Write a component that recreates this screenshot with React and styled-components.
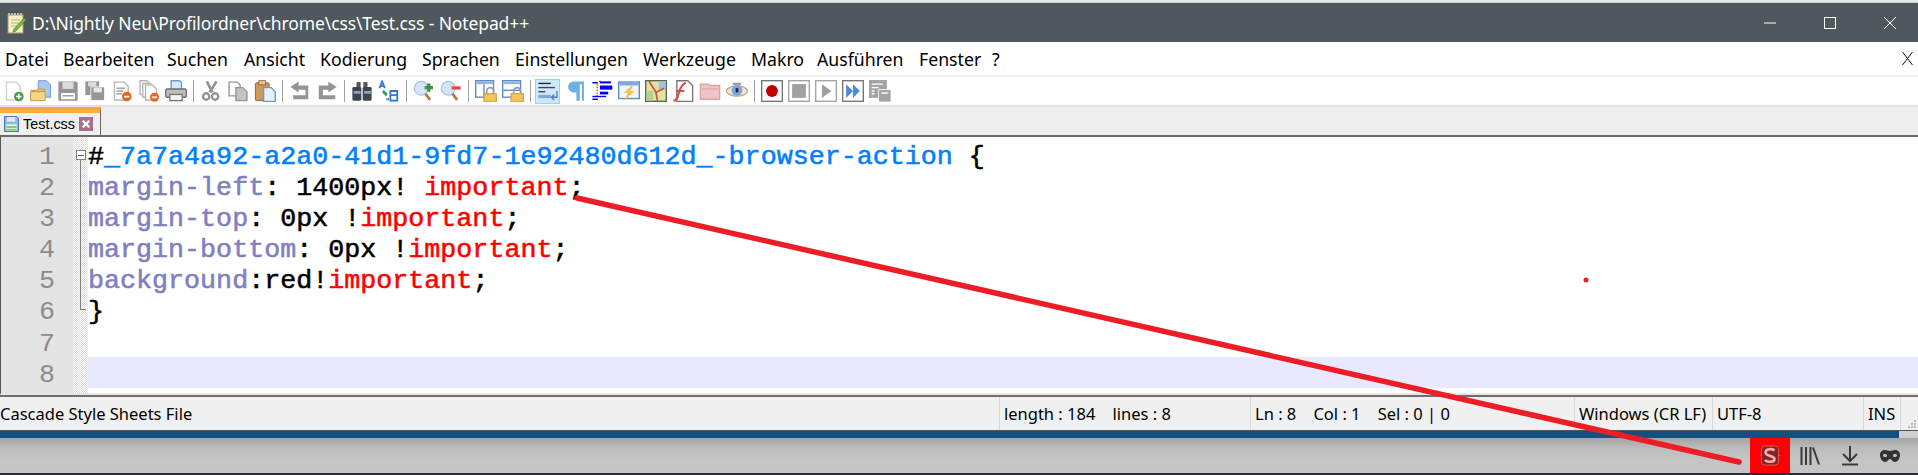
import React from 'react'
import styled, { createGlobalStyle } from 'styled-components'

const GlobalStyle = createGlobalStyle`
  html, body {
    margin: 0;
    padding: 0;
    background: #fff;
    overflow: hidden;
  }
`

const Page = styled.div`
  position: relative;
  width: 1918px;
  height: 475px;
  overflow: hidden;
  display: flex;
  flex-direction: column;
  font-family: 'Noto Sans', 'Open Sans', sans-serif;
`

const TopStrip = styled.div`
  height: 3px;
  flex: none;
  background: #e9e9e9;
  border-bottom: 1px solid #cfcfcf;
  box-sizing: border-box;
`

const TitleBar = styled.div`
  height: 39px;
  flex: none;
  background: #4e585d;
  display: flex;
  align-items: center;
  color: #fff;
  padding-left: 7px;
`

const TitleText = styled.span`
  margin-left: 5px;
  font-size: 17.5px;
  letter-spacing: -0.12px;
  white-space: nowrap;
  flex: 1;
`

const WindowButton = styled.div`
  width: 60px;
  display: flex;
  justify-content: center;
  align-items: center;
  &:last-child {
    margin-right: -2px;
  }
`

const MenuBar = styled.div`
  height: 33px;
  flex: none;
  background: #fff;
  display: flex;
  align-items: center;
  padding-left: 5px;
  font-size: 17.7px;
  color: #000;
  gap: 15px;
  position: relative;
`

const MenuItem = styled.span`
  width: ${(p) => p.$w}px;
  white-space: nowrap;
`

const MenuClose = styled.div`
  margin-left: auto;
  margin-right: 5px;
  display: flex;
`

const ToolStrip = styled.div`
  height: 32px;
  flex: none;
  box-sizing: border-box;
  background: #fff;
  border-top: 2px solid #f0f0f0;
  border-bottom: 2px solid #e2e2e2;
  display: flex;
  align-items: center;
`

const ToolButton = styled.div`
  width: ${(p) => (p.$active ? 25 : 27)}px;
  height: 25px;
  flex: none;
  box-sizing: border-box;
  display: flex;
  align-items: center;
  justify-content: center;
  margin: ${(p) => (p.$active ? '0 1px' : '0')};
  background: ${(p) => (p.$active ? '#cce8ff' : 'transparent')};
  border: 1px solid ${(p) => (p.$active ? '#99d1ff' : 'transparent')};
`

const ToolSeparator = styled.div`
  width: 8px;
  height: 22px;
  flex: none;
  display: flex;
  justify-content: center;
  &::before {
    content: '';
    width: 1px;
    background: #a0a0a0;
  }
`

const TabBar = styled.div`
  height: 28px;
  flex: none;
  background: #eeeeee;
  display: flex;
  border-bottom: 2px solid #6a6a6a;
`

const Tab = styled.div`
  width: 96px;
  background: #f0f0f0;
  border-top: 6px solid #fbaa3f;
  border-right: 1px solid #666;
  display: flex;
  align-items: center;
  padding-left: 4px;
  gap: 4px;
  font-family: 'Liberation Sans', sans-serif;
  font-size: 14.4px;
  color: #000;
`

const TabName = styled.span`
  width: 52px;
  white-space: nowrap;
`

const Editor = styled.div`
  height: 258px;
  flex: none;
  display: flex;
  background: #fff;
  border-left: 1px solid #555;
  border-bottom: 2px solid #e6e6e6;
  box-sizing: border-box;
  font-family: 'Liberation Mono', monospace;
  font-size: 26.7px;
`

const Gutter = styled.div`
  width: 72px;
  flex: none;
  background: #e4e4e4;
  padding-top: 2px;
  color: #8c8c8c;
  text-align: right;
`

const GutterNumber = styled.div`
  height: 31.1px;
  line-height: 36px;
  padding-right: 18px;
`

const FoldMargin = styled.div`
  width: 15px;
  flex: none;
  position: relative;
  background: repeating-conic-gradient(#dcdcdc 0% 25%, #ffffff 0% 50%) 0 0 / 2px 2px;
`

const FoldBox = styled.div`
  position: absolute;
  left: 3px;
  top: 13px;
  width: 10px;
  height: 10px;
  box-sizing: border-box;
  background: #fff;
  border: 1px solid #808080;
  display: flex;
  align-items: center;
  justify-content: center;
  &::before {
    content: '';
    width: 6px;
    height: 1px;
    background: #606060;
  }
`

const FoldLine = styled.div`
  position: absolute;
  left: 7px;
  top: 23px;
  width: 6px;
  height: 150px;
  box-sizing: border-box;
  border-left: 1px solid #808080;
  border-bottom: 1px solid #808080;
`

const Code = styled.div`
  flex: 1;
  padding-top: 2px;
  font-weight: 400;
  -webkit-text-stroke: 0.55px currentColor;
  min-width: 0;
`

const CodeLine = styled.div`
  height: 31.1px;
  line-height: 36px;
  white-space: pre;
  color: #000;
  background: ${(p) => (p.$current ? '#e8e8ff' : 'transparent')};
`

const Prop = styled.span`
  color: #8080c0;
`

const Important = styled.span`
  color: #ff0000;
`

const Selector = styled.span`
  color: #0080ff;
`

const StatusBar = styled.div`
  height: 33px;
  flex: none;
  background: #f0f0f0;
  border-top: 2px solid #6f6f6f;
  display: flex;
  font-size: 16.5px;
  color: #000;
  position: relative;
`

const StatusCell = styled.div`
  width: ${(p) => p.$w}px;
  flex: none;
  box-sizing: border-box;
  padding-left: ${(p) => (p.$first ? 0 : 4)}px;
  border-right: 1px solid #d8d8d8;
  display: flex;
  align-items: center;
  white-space: pre;
`

const Grip = styled.div`
  flex: 1;
  display: flex;
  align-items: flex-end;
  justify-content: flex-end;
  padding: 0 1px 1px 0;
`

const BlueRow = styled.div`
  height: 8px;
  flex: none;
  border-top: 1px solid #555;
  box-sizing: border-box;
  display: flex;
  background: #cfcfcf;
`

const BlueBar = styled.div`
  width: 1899px;
  background: #14507f;
`

const BrowserBar = styled.div`
  height: 35px;
  flex: none;
  background: linear-gradient(#a4a4a4 0, #bcbcbc 10px, #c5c5c5 22px);
  display: flex;
  justify-content: flex-end;
  padding-right: 8px;
`

const BrowserButton = styled.div`
  width: 40px;
  display: flex;
  align-items: center;
  justify-content: center;
  background: ${(p) => (p.$red ? '#ff0000' : 'transparent')};
`

const BottomEdge = styled.div`
  height: 2px;
  flex: none;
  background: #2b2e33;
`

const Annotation = styled.svg`
  position: absolute;
  left: 0;
  top: 0;
  pointer-events: none;
`

const Icon = ({ children, size = 22 }) => (
  <svg width={size} height={size} viewBox="0 0 16 16">
    {children}
  </svg>
)

const grey = '#959595'

const Page16 = ({ x = 2, y = 1, w = 10, h = 13, stroke = '#b5b5b5', fill = '#fff' }) => (
  <path d={`M${x + 0.5} ${y + 0.5}h${w - 3}l3 3v${h - 3}h-${w}z`} fill={fill} stroke={stroke} />
)

const Padlock = () => (
  <>
    <path d="M8.500 10V8a2.500 2.500 0 0 1 5 0v2" fill="none" stroke="#9a9a9a" strokeWidth="1.200" />
    <rect x="6.500" y="10" width="9" height="6" fill="#f2c65c" stroke="#c8963a" strokeWidth=".7" />
  </>
)

const toolIcons = {
  newFile: (
    <>
      <Page16 stroke="#d0d0d0" />
      <circle cx="11.500" cy="12" r="3.500" fill="#4a9a4a" />
      <path d="M9.500 12h4M11.500 10v4" stroke="#fff" strokeWidth="1.200" />
    </>
  ),
  open: (
    <>
      <path d="M6 .5h6l3 3v9H6z" fill="#a8c8ee" stroke="#6c9ad0" strokeWidth=".7" />
      <path d="M.5 7.500h4l1-1h5v2h-9z" fill="#e8c272" stroke="#c59a46" strokeWidth=".7" />
      <path d="M.5 8.500h10.500v6.500h-10.500z" fill="#f6d687" stroke="#c59a46" strokeWidth=".7" />
    </>
  ),
  save: (
    <>
      <path d="M1 1h13l1 1v13H1z" fill={grey} />
      <rect x="4" y="1.500" width="8" height="5" fill="#dcdcdc" />
      <rect x="3" y="9.500" width="10" height="4.500" fill="#fff" />
      <rect x="4" y="11" width="8" height="1" fill={grey} />
    </>
  ),
  saveAll: (
    <>
      <rect x="1" y="1" width="10" height="10" fill={grey} />
      <rect x="3" y="1.500" width="6" height="3" fill="#dcdcdc" />
      <rect x="5" y="5" width="10" height="10" fill={grey} stroke="#fff" strokeWidth=".6" />
      <rect x="7" y="5.500" width="6" height="3.500" fill="#e6e6e6" />
    </>
  ),
  close: (
    <>
      <Page16 />
      <path d="M4 6h6M4 8h5M4 10h4" stroke="#a0a0a0" />
      <circle cx="11.500" cy="12" r="3.500" fill="#e8651a" />
      <rect x="9.500" y="11.500" width="4" height="1.200" fill="#fff" />
    </>
  ),
  closeAll: (
    <>
      <Page16 x={1} y={0} w={8} h={10} />
      <Page16 x={3} y={2} w={8} h={10} />
      <Page16 x={5} y={3} w={8} h={11} />
      <circle cx="12" cy="12.500" r="3.300" fill="#e8651a" />
      <rect x="10" y="12" width="4" height="1.200" fill="#fff" />
    </>
  ),
  print: (
    <>
      <path d="M4.500.500h6l1.500 1.500v5h-7.500z" fill="#d7e7f7" stroke="#6c9ad0" />
      <rect x=".5" y="6.500" width="15" height="6" rx="1" fill="#bdbdbd" stroke="#6f6f6f" />
      <rect x="3.500" y="10.500" width="9" height="4.500" fill="#f5f5f5" stroke="#777" />
    </>
  ),
  cut: (
    <>
      <path d="M5 1l4 8M12 1L7 9" stroke={grey} strokeWidth="2" />
      <circle cx="4.500" cy="12" r="2.300" fill="none" stroke={grey} strokeWidth="1.800" />
      <circle cx="11" cy="12" r="2.300" fill="none" stroke={grey} strokeWidth="1.800" />
    </>
  ),
  copy: (
    <>
      <path d="M1.500 1.500h6l2 2v8h-8z" fill="#fff" stroke={grey} />
      <path d="M6.500 5.500h5l3 3v6.500h-8z" fill="#c4c4c4" stroke={grey} />
    </>
  ),
  paste: (
    <>
      <rect x="1" y="2" width="10" height="13" rx="1" fill="#c9995e" stroke="#8e6534" strokeWidth=".7" />
      <rect x="3.500" y="0.500" width="5" height="3" fill="#e2c59b" stroke="#8e6534" strokeWidth=".6" />
      <path d="M7 5.500h5.500l3 3v7h-8.500z" fill="#e6f0fb" stroke="#6c9ad0" />
    </>
  ),
  undo: <path d="M7 1L1 5l6 4V7h5v4H3v3h11V4H7z" fill={grey} />,
  redo: <path d="M9 1l6 4-6 4V7H5v4h9v3H2V4h7z" fill={grey} />,
  find: (
    <>
      <rect x="4" y="1.500" width="3" height="4" fill="#555" />
      <rect x="9" y="1.500" width="3" height="4" fill="#555" />
      <rect x="1" y="5" width="6.500" height="10" rx="1" fill="#3c4650" />
      <rect x="8.500" y="5" width="6.500" height="10" rx="1" fill="#3c4650" />
      <rect x="2" y="8" width="5" height="2" fill="#8fa3b6" />
      <rect x="9.500" y="8" width="5" height="2" fill="#8fa3b6" />
    </>
  ),
  replace: (
    <>
      <path d="M1 6l2-5 2 5M2 4.500h2" fill="none" stroke="#2f78d0" strokeWidth="1.300" />
      <path d="M9 8h5v3H9zM9 11h5v4H9z" fill="none" stroke="#2f78d0" strokeWidth="1.300" />
      <path d="M4 7l3 3-1 2-3-3z" fill="#3d9a5a" />
      <path d="M6 14h2" stroke="#2f78d0" strokeWidth="1.300" />
    </>
  ),
  zoomIn: (
    <>
      <circle cx="6" cy="6" r="5" fill="#d3e6f8" stroke="#a9c4de" />
      <path d="M9 10l3.500 4.500" stroke="#b27a3c" strokeWidth="2" />
      <path d="M11.500 2.500v6M8.500 5.500h6" stroke="#3e9140" strokeWidth="2.400" />
    </>
  ),
  zoomOut: (
    <>
      <circle cx="6" cy="6" r="5" fill="#d3e6f8" stroke="#a9c4de" />
      <path d="M9 10l3.500 4.500" stroke="#b27a3c" strokeWidth="2" />
      <rect x="8.500" y="4.500" width="6.500" height="2.500" fill="#e84040" stroke="#f7a0a0" strokeWidth=".5" />
    </>
  ),
  syncV: (
    <>
      <rect x=".5" y=".5" width="13" height="12" fill="#fff" stroke="#5c8cc4" />
      <rect x="1" y="1" width="12" height="2" fill="#8fb6e2" />
      <path d="M6.500 3v9" stroke="#5c8cc4" />
      <Padlock />
    </>
  ),
  syncH: (
    <>
      <rect x=".5" y=".5" width="13" height="12" fill="#fff" stroke="#5c8cc4" />
      <rect x="1" y="1" width="12" height="2" fill="#8fb6e2" />
      <path d="M1 7.500h12" stroke="#5c8cc4" />
      <Padlock />
    </>
  ),
  wrap: (
    <>
      <path d="M1 2.500h9" stroke="#222" strokeWidth="1" />
      <path d="M1 5.500h12" stroke="#444" strokeWidth="1" />
      <path d="M1 8.500h5" stroke="#444" strokeWidth="1" />
      <path d="M1 12h9" stroke="#7fa9d6" strokeWidth="2.400" />
      <path d="M14.500 8v4.500h-4M12.500 10.500l-2 2 2 2" fill="none" stroke="#4f81bd" />
    </>
  ),
  pilcrow: <path d="M13 1H7a4 4 0 0 0 0 8h2v6h2.500V3H13v12h1.500V1z" fill="#6fb0e8" />,
  indent: (
    <>
      <path d="M1 2h4M1 14h4M6 1h1" stroke="#0000ee" />
      <path d="M4.500 3v9" stroke="#d03030" strokeDasharray="1 1" />
      <rect x="6.500" y="1" width="8" height="1.500" fill="#0000ee" />
      <rect x="6.500" y="4" width="9" height="3" fill="#0000ee" />
      <rect x="6.500" y="8.500" width="6" height="2" fill="#0000ee" />
      <rect x="1" y="11.500" width="10" height="1" fill="#0000ee" />
    </>
  ),
  lightning: (
    <>
      <rect x=".5" y="1.500" width="15" height="12" fill="#f2f5fa" stroke="#5c8cc4" />
      <rect x="1" y="2" width="14" height="2" fill="#7faadd" />
      <path d="M10 4L4 9.500h3L5 14.500l7-6.500H9l2-4z" fill="#f0c445" />
    </>
  ),
  map: (
    <>
      <rect x=".5" y=".5" width="15" height="15" fill="#dfe5a0" stroke="#5c6650" />
      <path d="M1 8h5v7H1z" fill="#b7d08a" />
      <path d="M10 1h5v6h-5z" fill="#9cc3e6" />
      <path d="M3 1l5 8 1 6M8 9l6-3" fill="none" stroke="#d24a3a" strokeWidth="1.200" />
    </>
  ),
  fn: (
    <>
      <path d="M3.500.500h8l3.500 3.500v11.500h-11.500z" fill="#fff" stroke="#777" />
      <path d="M1 15c3 0 3-3 4-6s2-6 5-7" fill="none" stroke="#e0484c" strokeWidth="1.600" />
      <path d="M3 8h6" stroke="#e0484c" strokeWidth="1.400" />
    </>
  ),
  folder: (
    <>
      <path d="M1 3h6l1 1h7v10H1z" fill="#efc4c4" stroke="#d9a4a4" />
      <rect x="2" y="6" width="12" height="1" fill="#e5a9a9" />
    </>
  ),
  eye: (
    <>
      <path d="M0 8c3-5 13-5 16 0-3 5-13 5-16 0z" fill="#efe8d8" stroke="#c9a77c" />
      <circle cx="8" cy="7.500" r="4" fill="#7ea8d8" />
      <rect x="7" y="6" width="2" height="3" fill="#223" />
      <rect x="5" y="2" width="6" height="1.500" fill="#999" />
    </>
  ),
  record: (
    <>
      <rect x=".5" y=".5" width="15" height="15" fill="#fff" stroke="#777" />
      <circle cx="8" cy="8" r="4.300" fill="#c00000" />
    </>
  ),
  stop: (
    <>
      <rect x=".5" y=".5" width="15" height="15" fill="#fff" stroke="#a5a5a5" />
      <rect x="3" y="3" width="10" height="10" fill="#a0a0a0" />
    </>
  ),
  play: (
    <>
      <rect x=".5" y=".5" width="15" height="15" fill="#fff" stroke="#a5a5a5" />
      <path d="M5 3l7 5-7 5z" fill="#a0a0a0" />
    </>
  ),
  playMany: (
    <>
      <rect x=".5" y=".5" width="15" height="15" fill="#fff" stroke="#777" />
      <path d="M3 3l5 5-5 5zM8 3l5 5-5 5z" fill="#4c8ade" />
    </>
  ),
  saveMacro: (
    <>
      <rect x="0" y="0" width="13" height="13" fill="#a4a4a4" />
      <path d="M2 3h8M2 5.500h5M2 8h2M2 10h2" stroke="#fff" />
      <rect x="7" y="7" width="9" height="9" fill="#a4a4a4" stroke="#fff" strokeWidth=".6" />
      <path d="M9 9.500h5" stroke="#fff" />
    </>
  ),
}

const toolbar = [
  'newFile', 'open', 'save', 'saveAll', 'close', 'closeAll', 'print', '|',
  'cut', 'copy', 'paste', '|',
  'undo', 'redo', '|',
  'find', 'replace', '|',
  'zoomIn', 'zoomOut', '|',
  'syncV', 'syncH', '|',
  'wrap', 'pilcrow', 'indent',
  'lightning', 'map', 'fn', 'folder', 'eye', '|',
  'record', 'stop', 'play', 'playMany', 'saveMacro',
]

const menus = [
  ['Datei', 43],
  ['Bearbeiten', 89],
  ['Suchen', 62],
  ['Ansicht', 61],
  ['Kodierung', 87],
  ['Sprachen', 78],
  ['Einstellungen', 113],
  ['Werkzeuge', 93],
  ['Makro', 51],
  ['Ausführen', 87],
  ['Fenster', 58],
  ['?', 10],
]

const NotepadIcon = () => (
  <svg width="20" height="22" viewBox="0 0 20 22">
    <rect x="1" y="3" width="15" height="18" fill="#f7efc4" stroke="#a59a6c" />
    <path d="M2 3V1M5 3V1M8 3V1M11 3V1M14 3V1" stroke="#d8d8d8" strokeWidth="1.500" />
    <path d="M4 8h9M4 11h8M4 14h6" stroke="#b9b08a" />
    <path d="M7 17l10-11 2 2-10 11-3 1z" fill="#7cb83e" stroke="#4f7f20" strokeWidth=".7" />
    <rect x="17" y="0" width="2" height="2" fill="#a83030" />
  </svg>
)

const DiskIcon = () => (
  <svg width="15" height="16" viewBox="0 0 16 17">
    <path d="M.5.500h13l2 2v14h-15z" fill="#8db8e6" stroke="#3f6fa8" />
    <rect x="3" y="1" width="9" height="5" fill="#dfeaf6" />
    <rect x="2.500" y="9" width="11" height="7" fill="#fff" />
    <rect x="2.500" y="10.500" width="11" height="2.200" fill="#8cc56e" />
    <rect x="2.500" y="13.500" width="11" height="2.200" fill="#8cc56e" />
  </svg>
)

const TabClose = () => (
  <svg width="14" height="14" viewBox="0 0 15 15">
    <rect width="15" height="15" fill="#a9708c" />
    <path d="M4 4l7 7M11 4l-7 7" stroke="#fff" strokeWidth="2.600" />
  </svg>
)

export default function App() {
  return (
    <Page>
      <GlobalStyle />
      <TopStrip />
      <TitleBar>
        <NotepadIcon />
        <TitleText>D:\Nightly Neu\Profilordner\chrome\css\Test.css - Notepad++</TitleText>
        <WindowButton>
          <svg width="12" height="12" viewBox="0 0 12 12">
            <path d="M0 6h12" stroke="#fff" strokeWidth="1" />
          </svg>
        </WindowButton>
        <WindowButton>
          <svg width="12" height="12" viewBox="0 0 12 12">
            <rect x=".5" y=".5" width="11" height="11" fill="none" stroke="#fff" />
          </svg>
        </WindowButton>
        <WindowButton>
          <svg width="12" height="12" viewBox="0 0 12 12">
            <path d="M0 0l12 12M12 0L0 12" stroke="#fff" strokeWidth="1" />
          </svg>
        </WindowButton>
      </TitleBar>

      <MenuBar>
        {menus.map(([label, w]) => (
          <MenuItem key={label} $w={w}>
            {label}
          </MenuItem>
        ))}
        <MenuClose>
          <svg width="11" height="13" viewBox="0 0 11 13">
            <path d="M.5 0l10 13M10.500 0L.5 13" stroke="#111" strokeWidth="1" />
          </svg>
        </MenuClose>
      </MenuBar>

      <ToolStrip>
        {toolbar.map((name, i) =>
          name === '|' ? (
            <ToolSeparator key={i} />
          ) : (
            <ToolButton key={name} $active={name === 'wrap'}>
              <Icon>{toolIcons[name]}</Icon>
            </ToolButton>
          ),
        )}
      </ToolStrip>

      <TabBar>
        <Tab>
          <DiskIcon />
          <TabName>Test.css</TabName>
          <TabClose />
        </Tab>
      </TabBar>

      <Editor>
        <Gutter>
          {[1, 2, 3, 4, 5, 6, 7, 8].map((n) => (
            <GutterNumber key={n}>{n}</GutterNumber>
          ))}
        </Gutter>
        <FoldMargin>
          <FoldBox />
          <FoldLine />
        </FoldMargin>
        <Code>
          <CodeLine>
            #<Selector>_7a7a4a92-a2a0-41d1-9fd7-1e92480d612d_-browser-action</Selector> {'{'}
          </CodeLine>
          <CodeLine>
            <Prop>margin-left</Prop>: 1400px! <Important>important</Important>;
          </CodeLine>
          <CodeLine>
            <Prop>margin-top</Prop>: 0px !<Important>important</Important>;
          </CodeLine>
          <CodeLine>
            <Prop>margin-bottom</Prop>: 0px !<Important>important</Important>;
          </CodeLine>
          <CodeLine>
            <Prop>background</Prop>:red!<Important>important</Important>;
          </CodeLine>
          <CodeLine>{'}'}</CodeLine>
          <CodeLine />
          <CodeLine $current />
        </Code>
      </Editor>

      <StatusBar>
        <StatusCell $first $w={1000}>Cascade Style Sheets File</StatusCell>
        <StatusCell $w={251}>length : 184    lines : 8</StatusCell>
        <StatusCell $w={324}>Ln : 8    Col : 1    Sel : 0 | 0</StatusCell>
        <StatusCell $w={138}>Windows (CR LF)</StatusCell>
        <StatusCell $w={151}>UTF-8</StatusCell>
        <StatusCell $w={37}>INS</StatusCell>
        <Grip>
          <svg width="10" height="10" viewBox="0 0 10 10">
            <path d="M7 1h2v2H7zM4 4h2v2H4zM7 4h2v2H7zM1 7h2v2H1zM4 7h2v2H4zM7 7h2v2H7z" fill="#b8b8b8" />
          </svg>
        </Grip>
      </StatusBar>

      <BlueRow>
        <BlueBar />
      </BlueRow>

      <BrowserBar>
        <BrowserButton $red>
          <svg width="20" height="21" viewBox="0 0 20 21">
            <rect x="1.500" y="1" width="17" height="19" rx="3" fill="#8a2020" stroke="#cf5a5a" />
            <path d="M0 10.500h2M18 10.500h2" stroke="#cf5a5a" />
            <path d="M14.500 5.500C12.500 3.500 5.500 3.500 5.500 7.500S14.500 10.500 14.500 14 7 17.500 5 15" fill="none" stroke="#f0b0b0" strokeWidth="2.600" />
          </svg>
        </BrowserButton>
        <BrowserButton>
          <svg width="20" height="18" viewBox="0 0 20 18">
            <path d="M1.500 0v18M6 0v18M10.500 0v18" stroke="#3a3a3a" strokeWidth="2" />
            <path d="M13 .5l6 17" stroke="#3a3a3a" strokeWidth="2" />
          </svg>
        </BrowserButton>
        <BrowserButton>
          <svg width="18" height="21" viewBox="0 0 18 21">
            <path d="M9 1v14M2 9l7 7 7-7" fill="none" stroke="#3a3a3a" strokeWidth="2" />
            <path d="M1 19.500h16" stroke="#3a3a3a" strokeWidth="2" />
          </svg>
        </BrowserButton>
        <BrowserButton>
          <svg width="20" height="12" viewBox="0 0 20 12">
            <path
              d="M5 0c2 0 3 1 5 1s3-1 5-1c3 0 5 2 5 5s-2 7-5 7-3-3-5-3-2 3-5 3-5-4-5-7 2-5 5-5zM5 4c-1.500 0-2 .5-2 1.500S4 7 5.500 7 7 6 7 5.500 6.500 4 5 4zM15 4c-1.500 0-2 .5-2 1.500S14 7 14.500 7 17 6.500 17 5.500 16.500 4 15 4z"
              fillRule="evenodd"
              fill="#333"
            />
          </svg>
        </BrowserButton>
      </BrowserBar>
      <BottomEdge />

      <Annotation width="1918" height="475" viewBox="0 0 1918 475">
        <path d="M577 198L1739 462" stroke="#ee1c25" strokeWidth="5.500" strokeLinecap="round" />
        <circle cx="1586" cy="280" r="2.500" fill="#ee1c25" />
      </Annotation>
    </Page>
  )
}
